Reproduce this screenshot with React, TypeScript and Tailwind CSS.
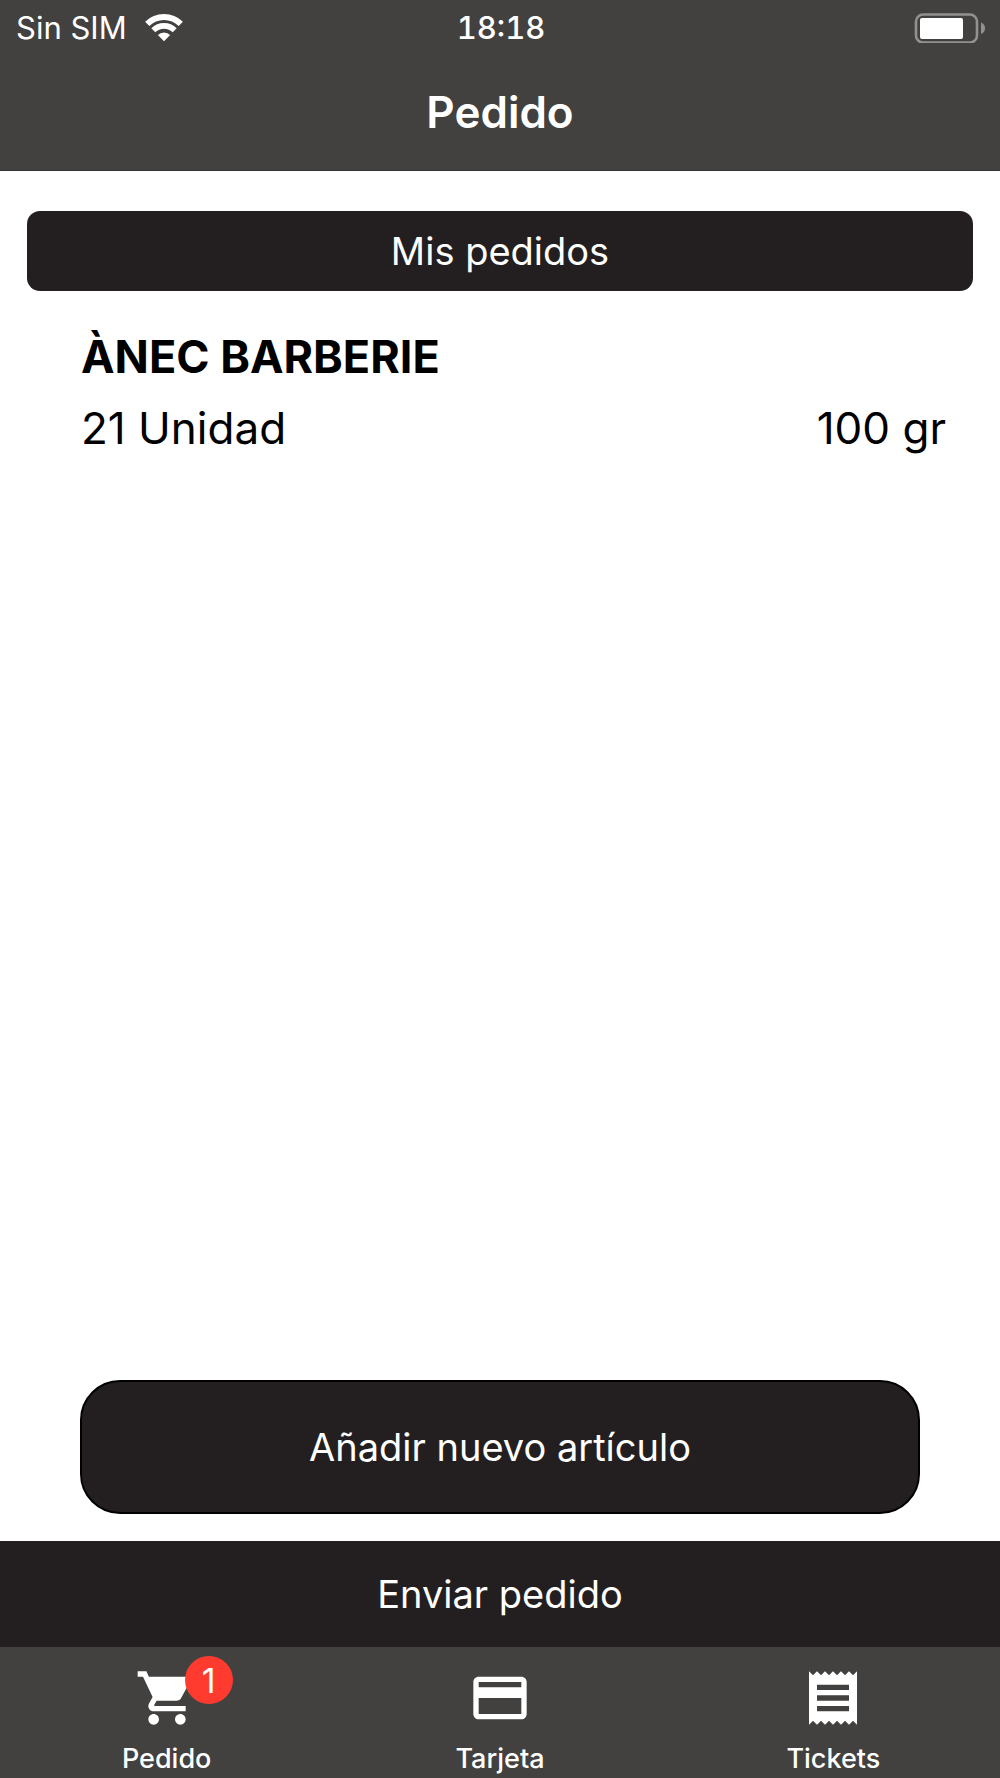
import React from 'react';
import { MdPayment, MdReceipt, MdShoppingCart } from 'react-icons/md';
import type { IconType } from 'react-icons';

type OrderItem = {
    id: string;
    name: string;
    quantity: string;
    weight: string;
};

type Tab = {
    id: string;
    label: string;
    icon: IconType;
    badge?: number;
};

const ITEMS: OrderItem[] = [
    { id: 'anec', name: 'ÀNEC BARBERIE', quantity: '21 Unidad', weight: '100 gr' },
];

const TABS: Tab[] = [
    { id: 'pedido', label: 'Pedido', icon: MdShoppingCart, badge: 1 },
    { id: 'tarjeta', label: 'Tarjeta', icon: MdPayment },
    { id: 'tickets', label: 'Tickets', icon: MdReceipt },
];

const WifiIcon: React.FC = () => (
    <svg className="h-7 w-[38px]" viewBox="0 0 38 28" fill="none" aria-hidden="true">
        <path d="M2.2 9.9a24 24 0 0 1 33.6 0" stroke="#fff" strokeWidth="6" />
        <path d="M8.3 16.3a15.2 15.2 0 0 1 21.4 0" stroke="#fff" strokeWidth="5.7" />
        <path d="M19 27.2l-6.2-6.2a8.8 8.8 0 0 1 12.4 0z" fill="#fff" />
    </svg>
);

const BatteryIcon: React.FC = () => (
    <svg className="h-[30px] w-[72px]" viewBox="0 0 72 30" fill="none" aria-hidden="true">
        <rect x="2" y="1.5" width="61" height="28" rx="7" stroke="#92918f" strokeWidth="2.6" />
        <rect x="6" y="5" width="43" height="21" rx="2" fill="#fff" />
        <path d="M67 9.5c5.4 2 5.4 9.5 0 11.5z" fill="#92918f" />
    </svg>
);

const Header: React.FC = () => (
    <header className="border-b border-[#353432] bg-[#42413f] text-white">
        <div className="grid h-14 grid-cols-[1fr_auto_1fr] items-center pl-4 pr-3.5 text-[31px] leading-8">
            <div className="flex items-center gap-[18px]">
                <span>Sin SIM</span>
                <WifiIcon />
            </div>
            <span className="font-medium tabular-nums">18:18</span>
            <div className="flex justify-end">
                <BatteryIcon />
            </div>
        </div>
        <h1 className="flex h-[114px] items-center justify-center pb-0.5 text-[44px] font-semibold">
            Pedido
        </h1>
    </header>
);

const TabBar: React.FC = () => (
    <nav className="grid grid-cols-3 bg-[#42413f] pb-[3px] pt-[19px] text-white">
        {TABS.map(({ id, label, icon: Icon, badge }) => (
            <a key={id} href={`#${id}`} className="flex flex-col items-center gap-[13px]">
                <span className="relative">
                    <Icon className="size-16" />
                    {badge && (
                        <span className="absolute -top-2.5 left-[50px] flex size-12 items-center justify-center rounded-full bg-[#ff3b30] text-[34px]">
                            {badge}
                        </span>
                    )}
                </span>
                <span className="text-[27px] font-medium leading-8">{label}</span>
            </a>
        ))}
    </nav>
);

export default function App() {
    return (
        <div className="flex min-h-screen flex-col bg-white font-['Inter',sans-serif] text-black">
            <Header />
            <main className="flex flex-1 flex-col">
                <div className="px-[27px] pt-10">
                    <button
                        type="button"
                        className="h-20 w-full rounded-[13px] bg-[#231f20] text-[38px] text-white"
                    >
                        Mis pedidos
                    </button>
                </div>
                <ul className="flex-1 pl-[81px] pr-[54px] pt-[42px]">
                    {ITEMS.map((item) => (
                        <li key={item.id} className="flex flex-col gap-[23px] text-[44px] leading-[48px]">
                            <h2 className="text-[45px] font-bold leading-[48px]">{item.name}</h2>
                            <div className="flex justify-between">
                                <span>{item.quantity}</span>
                                <span>{item.weight}</span>
                            </div>
                        </li>
                    ))}
                </ul>
                <div className="px-20 pb-[27px]">
                    <button
                        type="button"
                        className="h-[134px] w-full rounded-[40px] border-2 border-black bg-[#231f20] text-[38px] text-white"
                    >
                        Añadir nuevo artículo
                    </button>
                </div>
                <button type="button" className="h-[106px] w-full bg-[#231f20] text-[38px] text-white">
                    Enviar pedido
                </button>
            </main>
            <TabBar />
        </div>
    );
}
